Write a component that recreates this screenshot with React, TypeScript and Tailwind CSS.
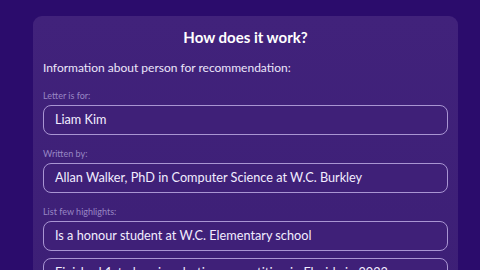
import React from "react";

const fields = [
  { label: "Letter is for:", values: ["Liam Kim"] },
  { label: "Written by:", values: ["Allan Walker, PhD in Computer Science at W.C. Burkley"] },
  {
    label: "List few highlights:",
    values: [
      "Is a honour student at W.C. Elementary school",
      "Finished 1st place in robotics competition in Florida in 2023",
    ],
  },
];

export default function App() {
  return (
    <div
      className="w-[480px] h-[270px] overflow-hidden bg-[#2b0c6c] pl-[33px] pt-[16px]"
      style={{ fontFamily: "Lato, 'Noto Sans', sans-serif" }}
    >
      <div className="w-[425px] h-[400px] rounded-[9px] bg-gradient-to-b from-[#41227b] to-[#3b1e74] px-[10px] pt-[11px]">
        <h1 className="text-center text-[15px] leading-[20px] font-bold text-white">How does it work?</h1>
        <p className="mt-[13px] text-[12px] leading-[16px] text-[#ece6fa]">
          Information about person for recommendation:
        </p>
        <div className="mt-[14px] flex flex-col gap-[13px]">
          {fields.map((f, i) => (
            <div key={i}>
              <div className="text-[9px] leading-[12px] text-[#9886c4]">{f.label}</div>
              <div className="mt-[3px] flex flex-col gap-[7px]">
                {f.values.map((v, j) => (
                  <div
                    key={j}
                    className="h-[30px] rounded-[8px] border border-[#a995d3] bg-[#3f2078] px-[11px] flex items-center text-[12.7px] text-[#f2edff]"
                  >
                    {v}
                  </div>
                ))}
              </div>
            </div>
          ))}
        </div>
      </div>
    </div>
  );
}
